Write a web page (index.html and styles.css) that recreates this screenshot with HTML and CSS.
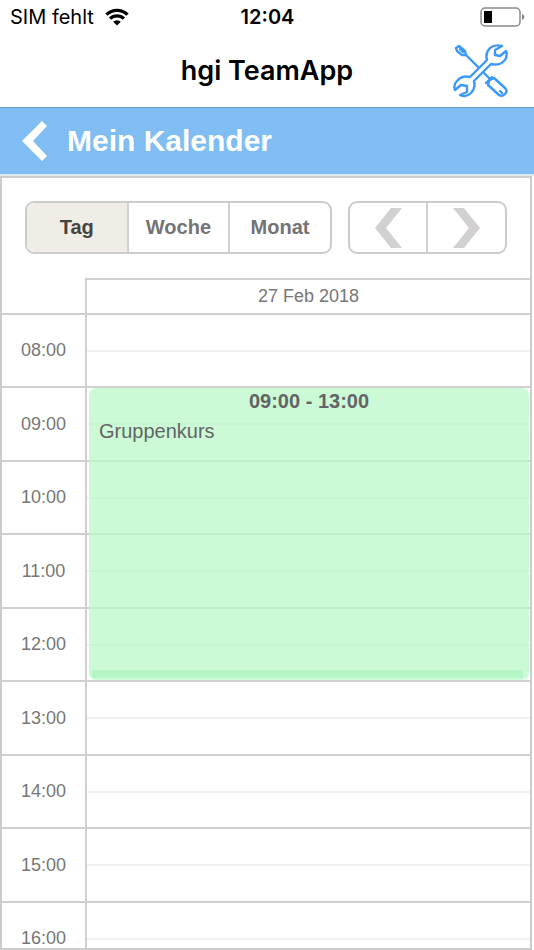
FILE: index.html
```html
<!DOCTYPE html>
<html lang="de">

<head>
    <meta charset="UTF-8">
    <meta name="viewport" content="width=device-width, initial-scale=1.0">
    <title>hgi TeamApp</title>

    <link rel="stylesheet" href="styles.css">
</head>

<body>

<div class="status-bar">
    <div class="carrier">
        <span>SIM fehlt</span>
        <svg width="24" height="18" viewBox="0 0 24 18" aria-hidden="true">
            <g fill="none" stroke="#000" stroke-width="3.2">
                <path d="M1.4 6.6 A15.2 15.2 0 0 1 22.6 6.6"/>
                <path d="M5.1 10.7 A9.8 9.8 0 0 1 18.9 10.7"/>
            </g>
            <path d="M12 17.6 L8.2 13.8 A5.4 5.4 0 0 1 15.8 13.8 Z"/>
        </svg>
    </div>
    <span class="clock">12:04</span>
    <svg class="battery" width="45" height="20" viewBox="0 0 45 20" aria-hidden="true">
        <rect x="1" y="1" width="39" height="18" rx="4" fill="#fff" stroke="#8a8a8a" stroke-width="1.5"/>
        <rect x="4" y="4" width="8" height="12" fill="#000"/>
        <path d="M42 7 Q44.5 8 44.5 10 Q44.5 12 42 13 Z" fill="#8a8a8a"/>
    </svg>
</div>

<header class="app-header">
    <h1>hgi TeamApp</h1>
    <button type="button" class="tools" aria-label="Einstellungen">
        <svg width="56" height="54" viewBox="0 0 56 54" fill="none" stroke="#3d98fb" stroke-width="2.4" stroke-linejoin="round" stroke-linecap="round">
            <path d="M3 4 L6 2 L12 7 L13 11 L9 11 L4 7 Z M7 5 L10 8"/>
            <path d="M13 11 L25 23 M31 29 L36 34"/>
            <path d="M33 39 L39 33 M37 36 L41 34 L52 44 Q55 47 52 50 Q49 53 46 51 L35 41 L36 37 M47 47 L49 49"/>
            <path d="M49 2 Q42 0 37 4 Q32 9 34 16 L17 33 Q9 31 4 37 Q0 41 2 46 L8 41 L14 42 L14 48 L7 51 Q13 54 18 49 Q23 44 21 37 L38 20 Q46 22 51 17 Q55 13 53 7 L47 12 L42 11 L42 6 Z"/>
        </svg>
    </button>
</header>

<nav class="page-bar">
    <button type="button" class="back" aria-label="Zurück">
        <svg width="25" height="40" viewBox="0 0 25 40">
            <path d="M20 0 L25 5 L11 20 L25 35 L20 40 L0 20 Z" fill="#fff"/>
        </svg>
    </button>
    <h2>Mein Kalender</h2>
</nav>

<main class="calendar">
    <div class="toolbar">
        <div class="btn-group">
            <button type="button" class="active">Tag</button>
            <button type="button">Woche</button>
            <button type="button">Monat</button>
        </div>
        <div class="btn-group">
            <button type="button" aria-label="Vorheriger Tag">
                <svg width="27" height="40" viewBox="0 0 27 40">
                    <path d="M16 0 H27 L11 20 L27 40 H16 L0 20 Z" fill="#d2d0d1"/>
                </svg>
            </button>
            <button type="button" aria-label="Nächster Tag">
                <svg width="27" height="40" viewBox="0 0 27 40">
                    <path d="M11 0 H0 L16 20 L0 40 H11 L27 20 Z" fill="#d2d0d1"/>
                </svg>
            </button>
        </div>
    </div>

    <table class="day">
        <thead>
            <tr>
                <td class="corner"></td>
                <th scope="col">27 Feb 2018</th>
            </tr>
        </thead>
        <tbody>
            <tr><th scope="row">08:00</th><td></td></tr>
            <tr>
                <th scope="row">09:00</th>
                <td class="booked">
                    <div class="event">
                        <strong>09:00 - 13:00</strong>
                        <p>Gruppenkurs</p>
                    </div>
                </td>
            </tr>
            <tr><th scope="row">10:00</th><td></td></tr>
            <tr><th scope="row">11:00</th><td></td></tr>
            <tr><th scope="row">12:00</th><td></td></tr>
            <tr><th scope="row">13:00</th><td></td></tr>
            <tr><th scope="row">14:00</th><td></td></tr>
            <tr><th scope="row">15:00</th><td></td></tr>
            <tr><th scope="row">16:00</th><td></td></tr>
        </tbody>
    </table>
</main>

</body>
</html>
```

FILE: styles.css
```css
* {
    box-sizing: border-box;
}

body {
    font-family: "Liberation Sans", Arial, sans-serif;
    background: #ffffff;
    display: flex;
    flex-direction: column;
    height: 100vh;
    margin: 0;
}

h1, h2, p {
    margin: 0;
}

button {
    font-family: inherit;
    padding: 0;
    border: none;
    background: none;
    cursor: pointer;
}

svg {
    display: block;
}

.status-bar {
    font-family: Inter, sans-serif;
    display: grid;
    grid-template-columns: 1fr auto 1fr;
    align-items: center;
    height: 34px;
    padding: 0 9px 0 10px;
    font-size: 20px;
}

.carrier {
    display: flex;
    align-items: center;
    gap: 11px;
}

.clock {
    font-weight: 600;
}

.battery {
    justify-self: end;
}

.app-header {
    display: grid;
    grid-template-columns: 1fr auto 1fr;
    align-items: center;
    height: 73px;
    padding: 0 25px;
}

.app-header h1 {
    font-family: Inter, sans-serif;
    font-size: 27px;
    font-weight: 600;
    grid-column: 2;
}

.tools {
    justify-self: end;
}

.page-bar {
    display: flex;
    align-items: center;
    gap: 20px;
    height: 69px;
    padding: 0 22px;
    background: #80bdf2;
    border-top: 1px solid #6b9fcb;
    border-bottom: 2px solid #dfe8f0;
}

.page-bar h2 {
    font-size: 30px;
    color: #ffffff;
}

.calendar {
    flex: 1;
    min-height: 0;
    margin-right: 2px;
    border: 2px solid #cccccc;
    overflow: hidden;
}

.toolbar {
    display: grid;
    grid-template-columns: 27fr 14fr;
    gap: 16px;
    padding: 23px 23px 24px;
}

.btn-group {
    display: flex;
    height: 53px;
    border: 2px solid #cccccc;
    border-radius: 9px;
    overflow: hidden;
}

.btn-group button {
    flex: 1;
    display: flex;
    justify-content: center;
    align-items: center;
    font-size: 20px;
    font-weight: bold;
    color: #747474;
}

.btn-group button + button {
    border-left: 2px solid #d0d0d0;
}

.btn-group .active {
    background: #f0ede6;
    color: #444444;
}

.day {
    width: 100%;
    table-layout: fixed;
    border-spacing: 0;
    font-size: 18px;
    color: #777777;
}

.day th, .day td {
    padding: 0;
    font-weight: normal;
    border-bottom: 2px solid #d0d0d0;
}

.day tr > :last-child {
    border-left: 2px solid #d0d0d0;
}

.day .corner {
    width: 83px;
}

.day thead tr {
    height: 37px;
}

.day thead th {
    border-top: 2px solid #d0d0d0;
}

.day tbody tr {
    height: 73px;
}

.day tbody tr:nth-child(even) {
    height: 74px;
}

/* half hour line */
.day tbody td {
    background: linear-gradient(#f0f0f0, #f0f0f0) 0 35px / 100% 2px no-repeat;
}

.day .booked {
    position: relative;
}

.event {
    position: absolute;
    top: 0;
    left: 2px;
    right: 1px;
    height: 292px;
    padding: 1px 10px;
    border-radius: 7px;
    background: rgba(187, 248, 202, 0.75);
    font-size: 20px;
    line-height: 24px;
    color: #646464;
}

.event strong {
    display: block;
    text-align: center;
    margin-bottom: 6px;
}

/* drag handle at the end of the event */
.event::after {
    content: "";
    position: absolute;
    left: 3px;
    right: 6px;
    bottom: 2px;
    height: 8px;
    background: #b5f6c7;
}
```
